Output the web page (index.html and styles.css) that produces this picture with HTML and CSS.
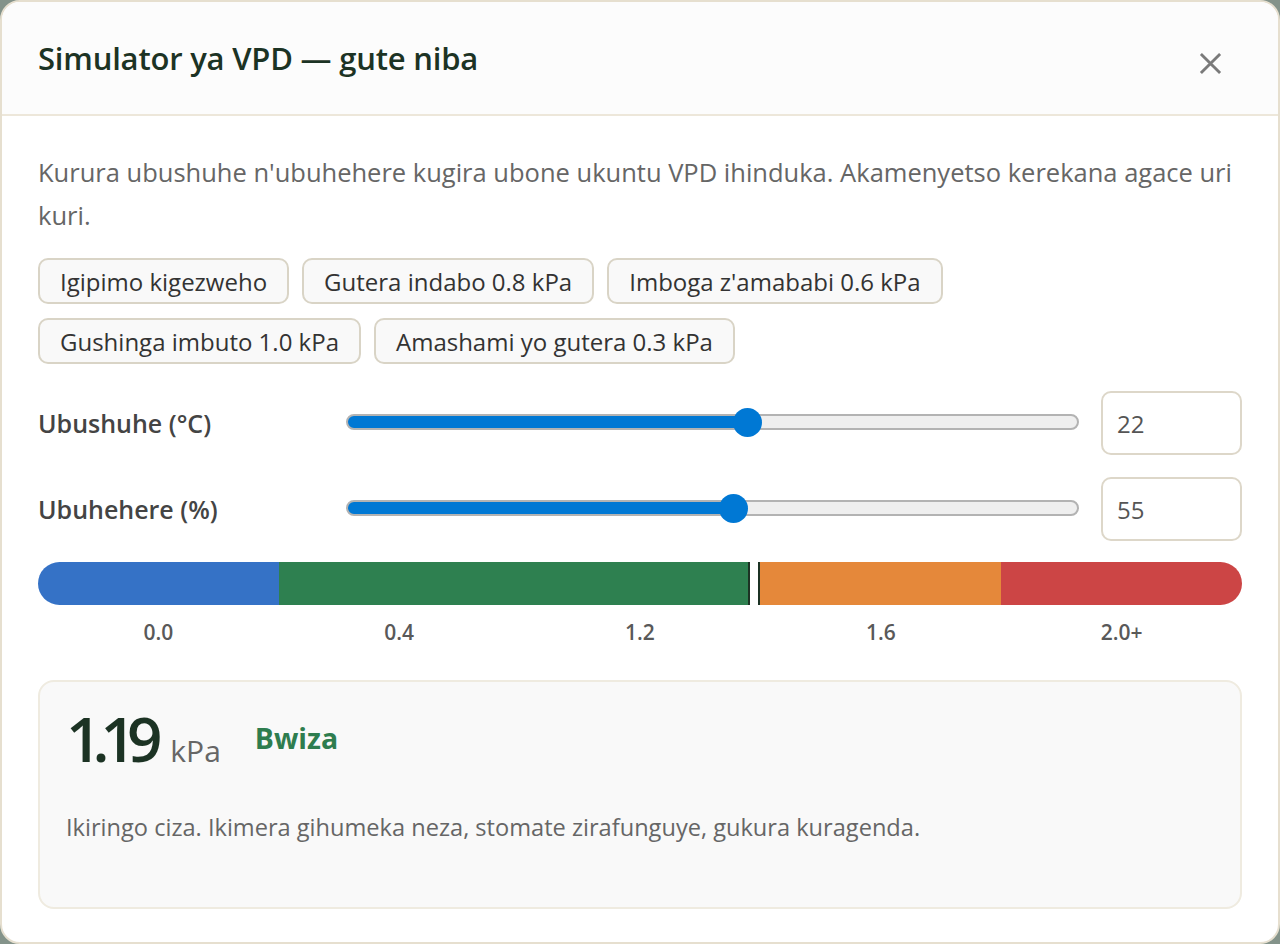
FILE: index.html
```html
<!DOCTYPE html>
<html lang="rw">
<head>
<meta charset="utf-8">
<title>Simulator ya VPD</title>
<link rel="stylesheet" href="styles.css">
</head>
<body>
<div class="dialog">
  <header class="dlg-head">
    <h1 class="dlg-title">Simulator ya VPD — gute niba</h1>
    <button class="close" aria-label="Funga">
      <svg width="23" height="23" viewBox="0 0 24 24"><path d="M2 2 L22 22 M22 2 L2 22" stroke="#7a7a7a" stroke-width="3" stroke-linecap="butt" fill="none"/></svg>
    </button>
  </header>
  <main class="dlg-body">
    <p class="intro">Kurura ubushuhe n'ubuhehere kugira ubone ukuntu VPD ihinduka. Akamenyetso kerekana agace uri kuri.</p>
    <div class="chips">
      <button class="chip">Igipimo kigezweho</button>
      <button class="chip">Gutera indabo 0.8 kPa</button>
      <button class="chip">Imboga z'amababi 0.6 kPa</button>
      <button class="chip">Gushinga imbuto 1.0 kPa</button>
      <button class="chip">Amashami yo gutera 0.3 kPa</button>
    </div>
    <div class="controls">
      <label class="ctl-label" for="t">Ubushuhe (°C)</label>
      <input class="range" id="t" type="range" min="0" max="40" value="22" style="--fill: 399px">
      <input class="num" type="number" value="22">
      <label class="ctl-label" for="h">Ubuhehere (%)</label>
      <input class="range" id="h" type="range" min="10" max="95" value="55" style="--fill: 385px">
      <input class="num" type="number" value="55">
    </div>
    <div class="scale">
      <div class="bar">
        <span class="seg seg-blue"></span>
        <span class="seg seg-green"></span>
        <span class="seg seg-orange"></span>
        <span class="seg seg-red"></span>
        <span class="marker" style="left: 710px"></span>
      </div>
      <div class="ticks">
        <span>0.0</span><span>0.4</span><span>1.2</span><span>1.6</span><span>2.0+</span>
      </div>
    </div>
    <section class="result">
      <div class="result-top">
        <span class="reading"><span class="value">1.19</span><span class="unit">kPa</span></span>
        <span class="status">Bwiza</span>
      </div>
      <p class="result-text">Ikiringo ciza. Ikimera gihumeka neza, stomate zirafunguye, gukura kuragenda.</p>
    </section>
  </main>
</div>
</body>
</html>
```
FILE: styles.css
```css
* { box-sizing: border-box; }
html, body { margin: 0; padding: 0; }
body {
  background: #84938a;
  font-family: "Open Sans", "Noto Sans", sans-serif;
  width: 1280px;
  height: 944px;
  overflow: hidden;
}
.dialog {
  width: 1280px;
  height: 944px;
  background: #ffffff;
  border: 2px solid #e6dfcf;
  border-radius: 20px;
  overflow: hidden;
  display: flex;
  flex-direction: column;
}
.dlg-head {
  height: 114px;
  flex: none;
  display: flex;
  align-items: center;
  justify-content: space-between;
  padding: 0 56px 0 36px;
  background: #fcfcfc;
  border-bottom: 2px solid #ede7da;
}
.dlg-title {
  margin: 0;
  font-size: 31px;
  font-weight: 600;
  color: #1c3324;
  letter-spacing: -0.2px;
}
.close {
  border: 0;
  background: transparent;
  padding: 0;
  width: 23px;
  height: 23px;
  margin-top: 10px;
  cursor: pointer;
}
.close svg { display: block; }
.dlg-body {
  padding: 35px 36px 33px 36px;
  display: flex;
  flex-direction: column;
  flex: 1;
}
.intro {
  margin: 0;
  font-size: 25.5px;
  line-height: 43px;
  color: #666666;
}
.chips {
  margin-top: 21px;
  display: flex;
  flex-wrap: wrap;
  gap: 14px 13px;
}
.chip {
  height: 46px;
  padding: 0 20px;
  border: 2px solid #d9d4c6;
  border-radius: 10px;
  background: #f9f9f9;
  font-family: inherit;
  font-size: 24px;
  color: #333333;
}
.controls {
  margin-top: 27px;
  display: grid;
  grid-template-columns: 286px 1fr 141px;
  column-gap: 22px;
  row-gap: 22px;
  align-items: center;
}
.ctl-label {
  font-size: 25px;
  font-weight: 600;
  color: #444444;
}
.range {
  -webkit-appearance: none;
  appearance: none;
  width: 100%;
  height: 30px;
  margin: 0;
  background: transparent;
  position: relative;
  top: -1px;
}
.range::-webkit-slider-runnable-track {
  height: 16px;
  border-radius: 8px;
  border: 2px solid #b3b3b3;
  background: linear-gradient(#0078d4, #0078d4) -2px 0 / var(--fill) 100% no-repeat, #efefef;
}
.range::-webkit-slider-thumb {
  -webkit-appearance: none;
  appearance: none;
  width: 29px;
  height: 29px;
  border-radius: 50%;
  background: #0078d4;
  border: 0;
  margin-top: -8.5px;
}
.num {
  width: 141px;
  height: 64px;
  border: 2px solid #ddd7c9;
  border-radius: 10px;
  background: #ffffff;
  padding: 0 0 0 14px;
  font-family: inherit;
  font-size: 24px;
  color: #555555;
  -moz-appearance: textfield;
}
.num::-webkit-inner-spin-button,
.num::-webkit-outer-spin-button { -webkit-appearance: none; margin: 0; }
.scale { margin-top: 21px; }
.bar {
  position: relative;
  height: 43px;
  border-radius: 22px;
  overflow: hidden;
  display: grid;
  grid-template-columns: repeat(5, 1fr);
}
.seg { display: block; }
.seg-blue { background: #3572c6; }
.seg-green { background: #2e8050; grid-column: span 2; }
.seg-orange { background: #e5883a; }
.seg-red { background: #cc4545; }
.marker {
  position: absolute;
  top: 0;
  bottom: 0;
  width: 12px;
  background: #ffffff;
  border-left: 2px solid #1c3324;
  border-right: 2px solid #1c3324;
}
.ticks {
  display: grid;
  grid-template-columns: repeat(5, 1fr);
  margin-top: 14px;
  font-size: 21px;
  font-weight: 600;
  line-height: 26px;
  color: #595959;
  text-align: center;
}
.result {
  margin-top: 35px;
  flex: 1;
  background: #f9f9f9;
  border: 2px solid #efebe0;
  border-radius: 16px;
  padding: 20px 26px;
}
.result-top {
  display: flex;
  align-items: center;
  gap: 34px;
}
.reading {
  display: inline-flex;
  align-items: baseline;
}
.value {
  font-size: 62px;
  font-weight: 600;
  letter-spacing: -9px;
  line-height: 72px;
  color: #1c3324;
}
.unit {
  margin-left: 17px;
  font-size: 30px;
  color: #666666;
}
.status {
  font-size: 28.5px;
  font-weight: 700;
  color: #2e7d4f;
}
.result-text {
  margin: 37px 0 0 0;
  font-size: 23.6px;
  line-height: 32px;
  color: #666666;
}
```
